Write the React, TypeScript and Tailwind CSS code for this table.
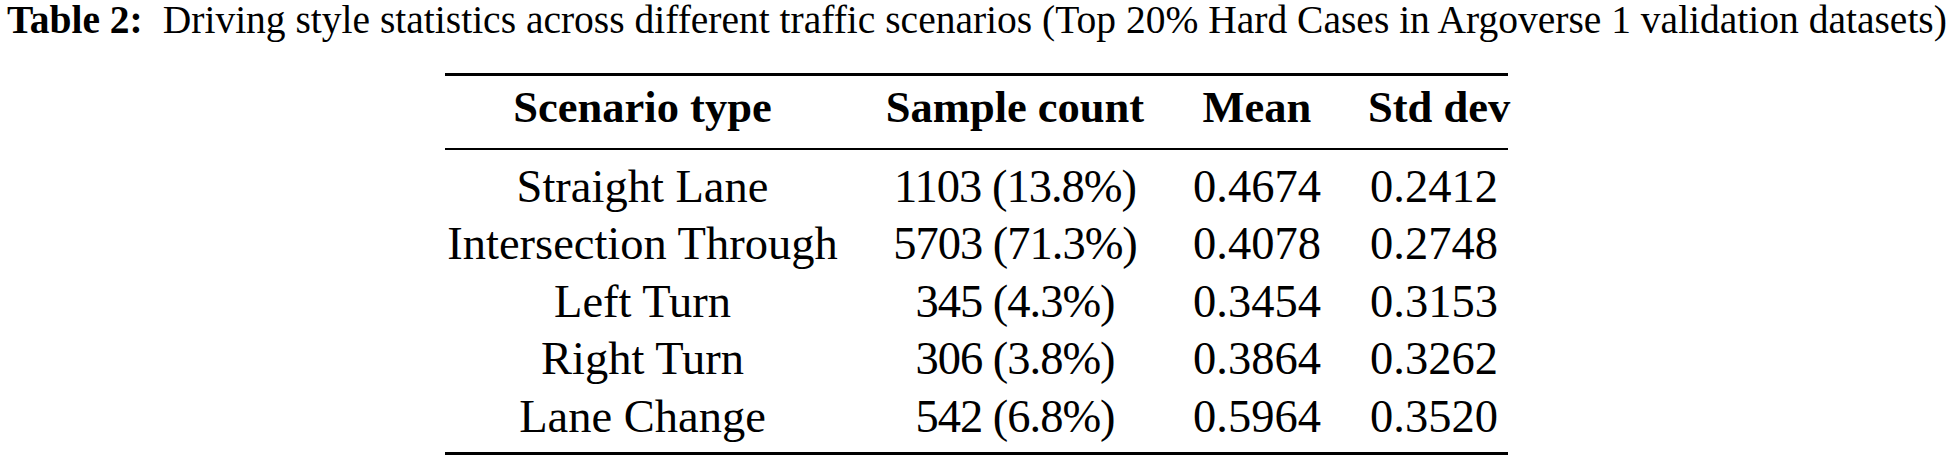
import React from "react";

const rows = [
  ["Straight Lane", "1103 (13.8%)", "0.4674", "0.2412"],
  ["Intersection Through", "5703 (71.3%)", "0.4078", "0.2748"],
  ["Left Turn", "345 (4.3%)", "0.3454", "0.3153"],
  ["Right Turn", "306 (3.8%)", "0.3864", "0.3262"],
  ["Lane Change", "542 (6.8%)", "0.5964", "0.3520"],
];

export default function App() {
  return (
    <div
      className="w-[1951px] h-[457px] bg-white text-black overflow-hidden"
      style={{ fontFamily: '"Liberation Serif", "Times New Roman", serif' }}
    >
      <div className="pl-[7px] text-[39.5px] leading-[40px] whitespace-nowrap">
        <span className="font-bold">Table 2:</span>
        <span className="ml-[20px]">
          Driving style statistics across different traffic scenarios (Top 20% Hard Cases in Argoverse 1 validation datasets)
        </span>
      </div>
      <div className="ml-[445px] mt-[33px] w-[1063px]">
        <div className="h-[3px] bg-black" />
        <div className="grid grid-cols-[395px_350px_178px_140px] text-[44.5px] font-bold leading-[57.6px] pt-[3px] pb-[11px] text-center whitespace-nowrap">
          <div>Scenario type</div>
          <div>Sample count</div>
          <div className="pr-[44px]">Mean</div>
          <div>Std dev</div>
        </div>
        <div className="h-[2px] bg-black" />
        <div className="pt-[8px] pb-[6px]">
          {rows.map((r) => (
            <div
              key={r[0]}
              className="grid grid-cols-[395px_350px_178px_140px] text-[46.5px] leading-[57.6px] text-center whitespace-nowrap"
            >
              <div>{r[0]}</div>
              <div className="tracking-[-1px]">{r[1]}</div>
              <div className="pr-[44px]">{r[2]}</div>
              <div className="pr-[8px]">{r[3]}</div>
            </div>
          ))}
        </div>
        <div className="h-[3px] bg-black" />
      </div>
    </div>
  );
}
